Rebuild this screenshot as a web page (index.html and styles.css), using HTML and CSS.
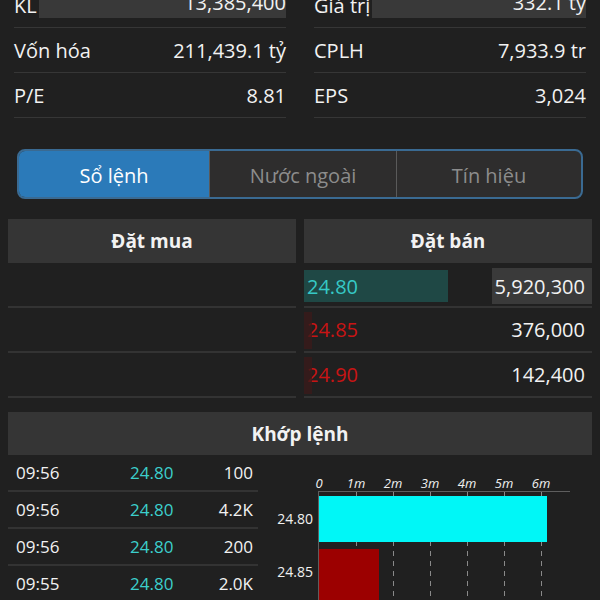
FILE: index.html
```html
<!DOCTYPE html>
<html lang="vi">
<head>
<meta charset="utf-8">
<title>Sổ lệnh</title>
<link rel="stylesheet" href="styles.css">
</head>
<body>
<div class="stats">
  <div class="stat-col">
    <div class="stat-row"><span class="label">KL</span><span class="value flash">13,385,400</span></div>
    <div class="stat-row"><span class="label">Vốn hóa</span><span class="value">211,439.1 tỷ</span></div>
    <div class="stat-row"><span class="label">P/E</span><span class="value">8.81</span></div>
  </div>
  <div class="stat-col">
    <div class="stat-row"><span class="label">Giá trị</span><span class="value flash">332.1 tỷ</span></div>
    <div class="stat-row"><span class="label">CPLH</span><span class="value">7,933.9 tr</span></div>
    <div class="stat-row"><span class="label">EPS</span><span class="value">3,024</span></div>
  </div>
</div>

<div class="tabs">
  <div class="tab active">Sổ lệnh</div>
  <div class="tab">Nước ngoài</div>
  <div class="tab">Tín hiệu</div>
</div>

<div class="book">
  <div class="book-col">
    <div class="book-head">Đặt mua</div>
    <div class="book-row"></div>
    <div class="book-row"></div>
    <div class="book-row"></div>
  </div>
  <div class="book-col">
    <div class="book-head">Đặt bán</div>
    <div class="book-row">
      <span class="price cyan hl">24.80</span>
      <span class="vol hlvol">5,920,300</span>
    </div>
    <div class="book-row">
      <span class="price red"><i class="rbar"></i>24.85</span>
      <span class="vol">376,000</span>
    </div>
    <div class="book-row">
      <span class="price red"><i class="rbar"></i>24.90</span>
      <span class="vol">142,400</span>
    </div>
  </div>
</div>

<div class="match-head">Khớp lệnh</div>
<div class="match">
  <div class="trades">
    <div class="trade"><span class="t">09:56</span><span class="p">24.80</span><span class="v">100</span></div>
    <div class="trade"><span class="t">09:56</span><span class="p">24.80</span><span class="v">4.2K</span></div>
    <div class="trade"><span class="t">09:56</span><span class="p">24.80</span><span class="v">200</span></div>
    <div class="trade"><span class="t">09:55</span><span class="p">24.80</span><span class="v">2.0K</span></div>
  </div>
  <div class="chart">
    <svg width="334" height="150" viewBox="0 0 334 150">
      <g class="xlab">
        <text x="61" y="33">0</text>
        <text x="98" y="33">1m</text>
        <text x="135" y="33">2m</text>
        <text x="172" y="33">3m</text>
        <text x="209" y="33">4m</text>
        <text x="246" y="33">5m</text>
        <text x="283" y="33">6m</text>
      </g>
      <g class="grid">
        <line x1="98.5" y1="36" x2="98.5" y2="150"/>
        <line x1="135.5" y1="36" x2="135.5" y2="150"/>
        <line x1="172.5" y1="36" x2="172.5" y2="150"/>
        <line x1="209.5" y1="36" x2="209.5" y2="150"/>
        <line x1="246.5" y1="36" x2="246.5" y2="150"/>
        <line x1="283.5" y1="36" x2="283.5" y2="150"/>
      </g>
      <line class="axis" x1="60" y1="36.5" x2="312" y2="36.5"/>
      <line class="axis" x1="60.5" y1="36" x2="60.5" y2="150"/>
      <rect x="61" y="41" width="228" height="46" fill="#00f7f7"/>
      <rect x="61" y="94" width="60" height="56" fill="#9c0000"/>
      <g class="ylab">
        <text x="55" y="69">24.80</text>
        <text x="55" y="122">24.85</text>
      </g>
    </svg>
  </div>
</div>
</body>
</html>
```
FILE: styles.css
```css
* { box-sizing: border-box; }
html, body { margin: 0; padding: 0; }
body {
  width: 600px;
  height: 600px;
  overflow: hidden;
  background: #202020;
  color: #f2f2f2;
  font-family: "Open Sans", "Liberation Sans", sans-serif;
}

.stats {
  display: grid;
  grid-template-columns: 1fr 1fr;
  column-gap: 28px;
  padding: 0 14px;
  margin-top: -17px;
}
.stat-row {
  display: flex;
  align-items: center;
  height: 45px;
  border-bottom: 1px solid #363636;
  font-size: 20px;
}
.stat-row .label { flex: none; }
.stat-row .value { flex: 1; text-align: right; }
.stat-row .value.flash {
  align-self: stretch;
  display: flex;
  align-items: center;
  justify-content: flex-end;
  margin: 4px 0 9px 2px;
  background: #393939;
}

.tabs {
  display: grid;
  grid-template-columns: 190px 187px 1fr;
  height: 50px;
  margin: 31px 17px 0 17px;
  border: 2px solid #3a6a92;
  border-radius: 8px;
  overflow: hidden;
  background: #2e2d2d;
}
.tab {
  display: flex;
  align-items: center;
  justify-content: center;
  padding-top: 3px;
  font-size: 20px;
  color: #8c8c8c;
  border-left: 1px solid #5a5a5a;
}
.tab:first-child { border-left: none; }
.tab.active {
  background: #2b7ab9;
  color: #ffffff;
}

.book {
  display: grid;
  grid-template-columns: 1fr 1fr;
  column-gap: 8px;
  padding: 0 8px;
  margin-top: 20px;
}
.book-head {
  height: 44px;
  background: #353535;
  display: flex;
  align-items: center;
  justify-content: center;
  font-size: 19px;
  font-weight: 700;
}
.book-row {
  height: 45px;
  border-bottom: 2px solid #333333;
  display: flex;
  align-items: center;
  justify-content: space-between;
  font-size: 20px;
}
.price {
  position: relative;
  align-self: stretch;
  display: flex;
  align-items: center;
  padding-left: 3px;
}
.price.hl {
  width: 144px;
  margin: 7px 0 4px;
  background: #1f4845;
}
.cyan { color: #36c9c6; }
.red { color: #c81414; }
.rbar {
  position: absolute;
  left: 0;
  top: 4px;
  bottom: 2px;
  width: 8px;
  background: #3a1a1a;
  opacity: 0.8;
}
.vol {
  padding-right: 7px;
}
.vol.hlvol {
  align-self: stretch;
  display: flex;
  align-items: center;
  width: 100px;
  justify-content: flex-end;
  margin: 5px 0 2px;
  background: #3a3a3a;
}

.match-head {
  margin: 14px 8px 0 8px;
  height: 43px;
  background: #353535;
  display: flex;
  align-items: center;
  justify-content: center;
  font-size: 19px;
  font-weight: 700;
}
.match {
  display: grid;
  grid-template-columns: 250px 1fr;
  padding-left: 8px;
}
.trade {
  display: grid;
  grid-template-columns: 114px 60px 1fr;
  align-items: center;
  height: 37px;
  border-bottom: 2px solid #333333;
  padding: 0 5px 0 8px;
  font-size: 17px;
}
.trade .p { color: #3ccfcc; }
.trade .v { text-align: right; }

.chart svg { display: block; }
.xlab text {
  fill: #f0f0f0;
  font-size: 13px;
  font-style: italic;
  text-anchor: middle;
  font-family: "Open Sans", "Liberation Sans", sans-serif;
}
.ylab text {
  fill: #f0f0f0;
  font-size: 14px;
  text-anchor: end;
  font-family: "Open Sans", "Liberation Sans", sans-serif;
}
.axis { stroke: #5e5e5e; stroke-width: 1; }
.grid line { stroke: #8a8a8a; stroke-width: 1; stroke-dasharray: 5 5; }
```
